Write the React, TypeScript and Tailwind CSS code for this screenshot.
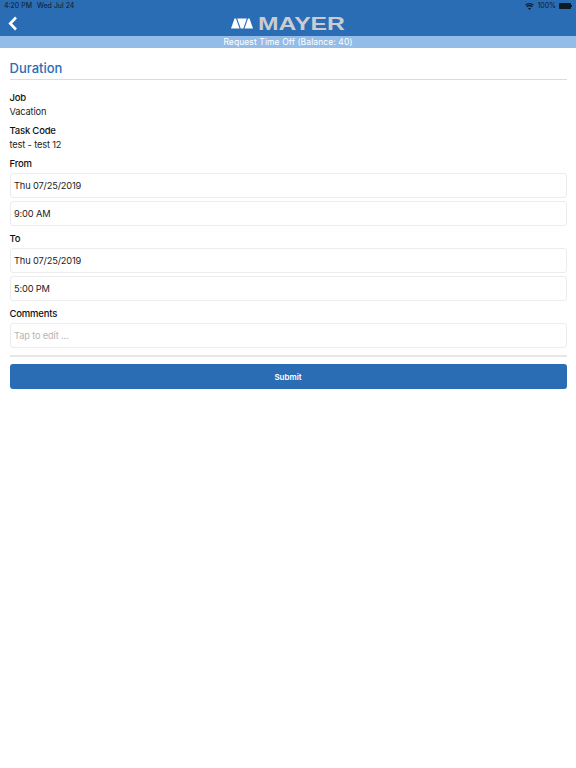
import React from "react";

const sans = "font-['Inter','Liberation_Sans',sans-serif]";

function Label({ children, className = "" }: { children: React.ReactNode; className?: string }) {
  return <div className={`text-[9.5px] tracking-[-0.2px] leading-[14px] font-medium text-[#111] ${className}`}>{children}</div>;
}

function Value({ children, className = "" }: { children: React.ReactNode; className?: string }) {
  return <div className={`text-[9.25px] tracking-[-0.15px] leading-[14px] text-[#222] ${className}`}>{children}</div>;
}

function Field({ children, muted = false, className = "" }: { children: React.ReactNode; muted?: boolean; className?: string }) {
  return (
    <div className={`h-[25px] flex items-center px-[3.5px] bg-white border border-[#ececec] rounded-[3px] text-[9.25px] tracking-[-0.15px] ${muted ? "text-[#b5b5b5]" : "text-[#222]"} ${className}`}>
      {children}
    </div>
  );
}

export default function App() {
  return (
    <div className={`w-[576px] h-[768px] bg-white flex flex-col ${sans}`}>
      <header className="relative h-[36px] bg-[#2a6db5] shrink-0 flex items-center justify-center">
        <div className="absolute left-[4px] top-[1px] text-[7px] leading-[10px] text-[#0d1a2a]">
          <span>4:20 PM</span>
          <span className="ml-[5px]">Wed Jul 24</span>
        </div>
        <div className="absolute right-[4px] top-[1px] h-[10px] flex items-center gap-[3px] text-[7px] text-[#0d1a2a]">
          <svg width="9" height="7" viewBox="0 0 18 14" fill="#0d1a2a">
            <path d="M9 14 L6 10.5 A5 5 0 0 1 12 10.5 Z M4.4 8.6 L2.6 6.6 A9.5 9.5 0 0 1 15.4 6.6 L13.6 8.6 A7 7 0 0 0 4.4 8.6 Z M1.4 5.2 L0 3.6 A13.5 13.5 0 0 1 18 3.6 L16.6 5.2 A11.5 11.5 0 0 0 1.4 5.2 Z" />
          </svg>
          <span>100%</span>
          <span className="flex items-center">
            <span className="block w-[12px] h-[6px] rounded-[1px] bg-[#0d1a2a]" />
            <span className="block w-[1px] h-[2px] bg-[#0d1a2a]" />
          </span>
        </div>
        <svg className="absolute left-[8px] top-[16px]" width="10" height="15" viewBox="0 0 10 15" fill="none">
          <path d="M8 1.5 L2.2 7.5 L8 13.5" stroke="white" strokeWidth="2.6" />
        </svg>
        <div className="flex items-center mt-[11px] gap-[5px]">
          <svg width="22" height="11" viewBox="0 0 22 10" fill="white">
            <path d="M0 10 L3.5 0 H5 L8.5 10 Z" />
            <path d="M6.2 0 H15.8 L12.3 10 H9.7 Z" />
            <path d="M22 10 L18.5 0 H17 L13.5 10 Z" />
          </svg>
          <span className="text-[19px] leading-[14px] font-['Liberation_Sans',sans-serif] font-bold text-[#c9ccd1] inline-block w-[87px] origin-left scale-x-[1.3]">
            MAYER
          </span>
        </div>
      </header>

      <div className="h-[12px] bg-[#93bde8] shrink-0 flex items-center justify-center text-[8.5px] text-white tracking-[0.1px]">
        Request Time Off (Balance: 40)
      </div>

      <main className="px-[9.5px] pt-[11px] flex flex-col">
        <h1 className="text-[13px] leading-[18px] font-medium text-[#2a6db5] pb-[2px] border-b border-[#dcdcdc]">Duration</h1>

        <Label className="mt-[11px]">Job</Label>
        <Value>Vacation</Value>
        <Label className="mt-[5px]">Task Code</Label>
        <Value>test - test 12</Value>
        <Label className="mt-[5px] mb-[2px]">From</Label>
        <Field>Thu 07/25/2019</Field>
        <Field className="mt-[3px]">9:00 AM</Field>
        <Label className="mt-[6px] mb-[2px]">To</Label>
        <Field>Thu 07/25/2019</Field>
        <Field className="mt-[3px]">5:00 PM</Field>
        <Label className="mt-[6px] mb-[2px]">Comments</Label>
        <Field muted>Tap to edit ...</Field>
        <div className="h-[2px] bg-[#e6e6e6] mt-[7px]" />
        <button className="mt-[7px] h-[25px] w-full rounded-[3px] bg-[#2a6db5] text-white text-[8px] font-semibold">Submit</button>
      </main>
    </div>
  );
}
